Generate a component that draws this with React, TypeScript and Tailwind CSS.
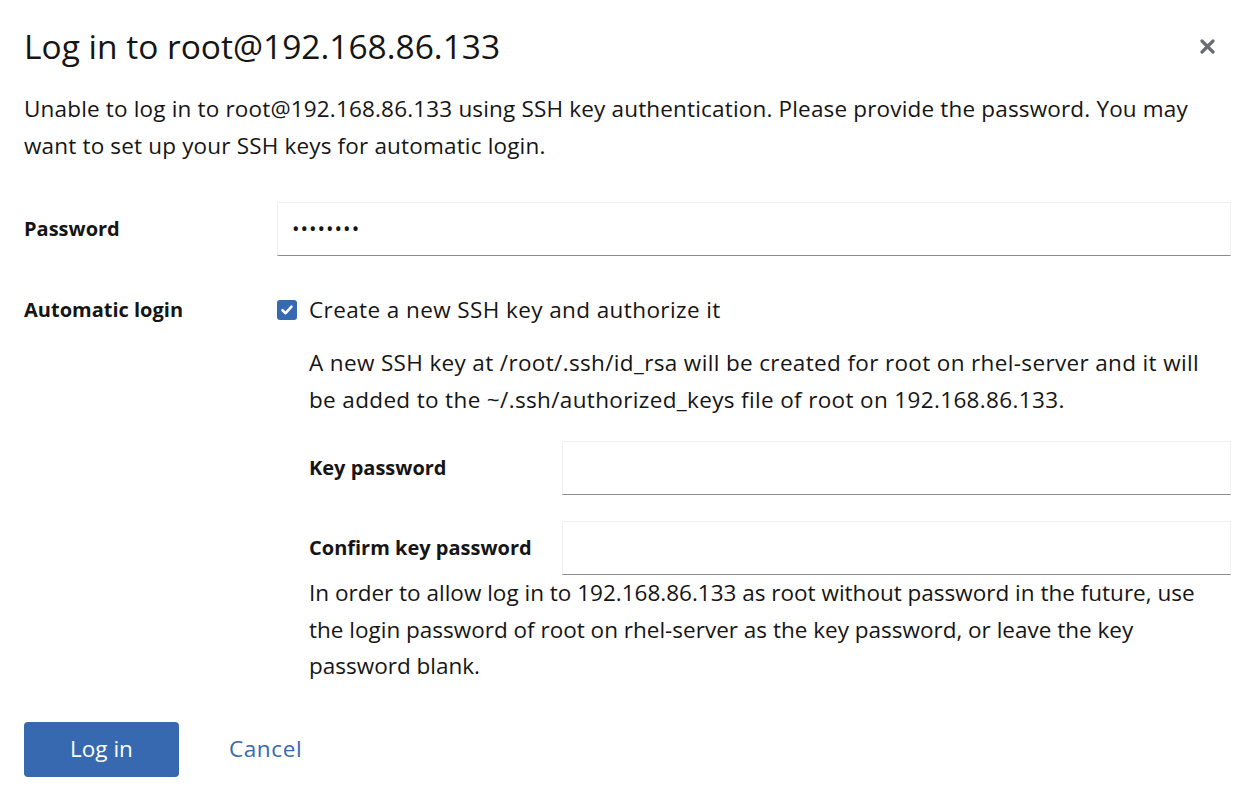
import React from 'react'

const font = { fontFamily: '"Open Sans", "Liberation Sans", sans-serif' }

function Field({ value }: { value?: string }) {
  return (
    <div className="h-[54px] w-full border border-[#f0f0f0] border-b-[#8a8d90] bg-white flex items-center px-[14px] text-[20px] text-[#151515] tracking-[1px]">
      {value}
    </div>
  )
}

export default function App() {
  return (
    <div className="w-[1249px] h-[788px] bg-white text-[#151515]" style={font}>
      <div className="pl-[24px] pr-[18px] pt-[26px]">
        <div className="flex items-center justify-between">
          <h1 className="text-[33.5px] leading-[40px] font-medium">Log in to root@192.168.86.133</h1>
          <svg width="15" height="15" viewBox="0 0 15 15" className="mr-[16px]">
            <path d="M2 2 L13 13 M13 2 L2 13" stroke="#6a6e73" strokeWidth="3.2" strokeLinecap="round" />
          </svg>
        </div>

        <p className="mt-[24px] text-[22.5px] leading-[37px] tracking-[0.17px]">
          <span className="block whitespace-nowrap">Unable to log in to root@192.168.86.133 using SSH key authentication. Please provide the password. You may</span>
          <span className="block whitespace-nowrap">want to set up your SSH keys for automatic login.</span>
        </p>

        <div className="mt-[38px] grid grid-cols-[253px_1fr]">
          <div className="flex items-center text-[20px] font-bold">Password</div>
          <Field value="••••••••" />

          <div className="mt-[35px] text-[20px] font-bold leading-[37px]">Automatic login</div>
          <div className="mt-[35px]">
            <label className="flex items-center gap-[12px] text-[22.5px] leading-[37px] tracking-[0.4px]">
              <span className="w-[20px] h-[20px] rounded-[3px] bg-[#3669b0] flex items-center justify-center">
                <svg width="14" height="14" viewBox="0 0 14 14">
                  <path d="M2.5 7.2 L5.6 10.2 L11.5 3.6" stroke="white" strokeWidth="2.6" fill="none" strokeLinecap="round" strokeLinejoin="round" />
                </svg>
              </span>
              Create a new SSH key and authorize it
            </label>
            <div className="pl-[32px]">
              <p className="mt-[16px] text-[22.5px] leading-[37px] tracking-[0.35px]">
                <span className="block whitespace-nowrap">A new SSH key at /root/.ssh/id_rsa will be created for root on rhel-server and it will</span>
                <span className="block whitespace-nowrap">be added to the ~/.ssh/authorized_keys file of root on 192.168.86.133.</span>
              </p>
              <div className="mt-[23px] grid grid-cols-[253px_1fr] gap-y-[26px]">
                <div className="flex items-center text-[20px] font-bold">Key password</div>
                <Field />
                <div className="flex items-center text-[20px] font-bold">Confirm key password</div>
                <Field />
              </div>
              <p className="text-[22.5px] leading-[36.5px]">
                <span className="block whitespace-nowrap">In order to allow log in to 192.168.86.133 as root without password in the future, use</span>
                <span className="block whitespace-nowrap">the login password of root on rhel-server as the key password, or leave the key</span>
                <span className="block whitespace-nowrap">password blank.</span>
              </p>
            </div>
          </div>
        </div>

        <div className="mt-[37px] flex items-center gap-[50px]">
          <button className="w-[155px] h-[55px] rounded-[4px] bg-[#3669b0] text-white text-[22.5px]">Log in</button>
          <button className="text-[22.5px] tracking-[0.6px] text-[#3669b0]">Cancel</button>
        </div>
      </div>
    </div>
  )
}
